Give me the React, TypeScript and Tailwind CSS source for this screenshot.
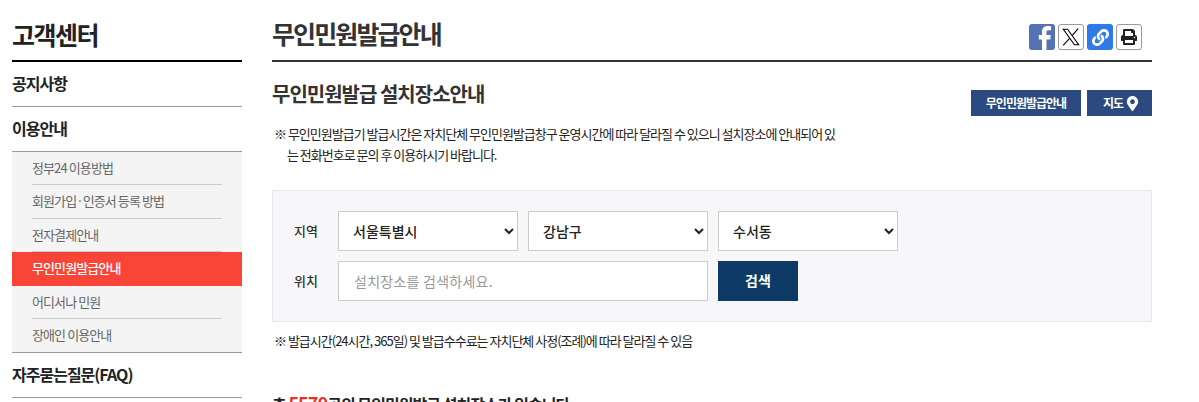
import React from 'react'
import { FaLink, FaMapMarkerAlt, FaPrint } from 'react-icons/fa'

const subMenus = ['정부24 이용방법', '회원가입·인증서 등록 방법', '전자결제안내', '무인민원발급안내', '어디서나 민원', '장애인 이용안내']

const App = () => {
  return (
    <div className="h-[402px] w-[1199px] overflow-hidden bg-white text-[#222] [font-family:'Noto_Sans_CJK_KR','Noto_Sans',sans-serif]">
      <div className="flex gap-[30px] pl-3">
        <aside className="w-[230px] shrink-0">
          <h2 className="h-[62px] border-b-2 border-black pt-[14px] text-[25px] leading-[40px] font-bold tracking-[-1.5px] text-[#222]">고객센터</h2>
          <div className="flex h-[45px] items-center border-b border-[#999] pb-[3px] text-[16px] font-bold tracking-[-1px]">공지사항</div>
          <div className="flex h-[45px] items-center border-b border-[#999] pb-[2px] text-[16px] font-bold tracking-[-1px]">이용안내</div>
          <ul className="h-[201px] border-b border-[#999] bg-[#f4f4f4]">
            {subMenus.map((menu, i) => (
              <li
                key={menu}
                className={
                  i === 3
                    ? 'flex h-[33.4px] items-center bg-[#f94438] pb-[2px] pl-5 text-[13px] font-medium tracking-[-0.9px] text-white'
                    : 'mx-5 flex h-[33.4px] items-center border-b border-[#ccc] pb-[1px] text-[13px] tracking-[-0.9px] text-[#666] last:border-b-0'
                }
              >
                {menu}
              </li>
            ))}
          </ul>
          <div className="flex h-[45px] items-center border-b border-[#999] pb-[3px] text-[16px] font-bold tracking-[-1px]">자주묻는질문(FAQ)</div>
        </aside>

        <main className="w-[880px] shrink-0">
          <div className="flex h-[62px] items-start justify-between border-b-2 border-[#333]">
            <h1 className="pt-[13px] text-[25px] leading-[40px] font-bold tracking-[-1.9px] text-[#333]">무인민원발급안내</h1>
            <div className="mt-6 mr-[10px] flex gap-[3px]">
              <span className="h-[26px] w-[26px] overflow-hidden rounded-[3px] bg-[#5472b4] text-white">
                <svg viewBox="0 0 26 26" className="h-[26px] w-[26px]" fill="currentColor">
                  <path d="M17.5 26V15.5h3.7l.6-4.4h-4.3V8.4c0-1.3.4-2.2 2.2-2.2h2.4V2.3C21.7 2.2 20.3 2 18.7 2 15.4 2 13 4.1 13 7.9v3.2H9.8v4.4H13V26Z" />
                </svg>
              </span>
              <span className="flex h-[26px] w-[26px] items-center justify-center rounded-[3px] border border-[#999] bg-white text-black">
                <svg viewBox="0 0 24 24" className="h-5 w-5" fill="currentColor">
                  <path fillRule="evenodd" d="M1.5 2H8.2L22.5 22H15.8ZM4 3.2 16.4 20.8H20L7.6 3.2Z" />
                  <path d="M20.6 2 13.3 10.3M10.6 13.4 2.6 22" stroke="currentColor" strokeWidth="1.3" fill="none" />
                </svg>
              </span>
              <span className="flex h-[26px] w-[26px] items-center justify-center rounded-[3px] bg-[#2f7ae5] text-white">
                <FaLink className="text-[17px]" />
              </span>
              <span className="flex h-[26px] w-[26px] items-center justify-center rounded-[3px] border border-[#999] bg-white text-[#222]">
                <FaPrint className="text-[16px]" />
              </span>
            </div>
          </div>

          <div className="flex justify-between">
            <div>
              <h3 className="mt-[17px] text-[20px] leading-[30px] font-bold tracking-[-1px] text-[#333]">무인민원발급 설치장소안내</h3>
              <p className="mt-[14px] ml-[2px] pl-[13px] -indent-[13px] text-[13px] leading-[21px] tracking-[-1px] whitespace-nowrap text-[#222]">
                ※ 무인민원발급기 발급시간은 자치단체 무인민원발급창구 운영시간에 따라 달라질 수 있으니 설치장소에 안내되어 있
                <br />
                는 전화번호로 문의 후 이용하시기 바랍니다.
              </p>
            </div>
            <div className="mt-7 flex gap-[6px]">
              <span className="flex h-[26px] w-[110px] items-center justify-center bg-[#2a4a80] text-[12px] font-bold tracking-[-1px] text-white">무인민원발급안내</span>
              <span className="flex h-[26px] w-[65px] items-center gap-[2px] bg-[#2a4a80] pl-4 text-[12px] font-bold tracking-[-1px] text-white">
                지도 <FaMapMarkerAlt className="text-[15px]" />
              </span>
            </div>
          </div>

          <div className="mt-[25px] h-[132px] border border-[#e8e8e8] bg-[#f7f7f9] px-[21px] pt-[20px]">
            <div className="flex items-center">
              <span className="w-11 text-[13px] font-medium text-[#333]">지역</span>
              <div className="flex gap-[10px]">
                <select className="h-10 w-[180px] border border-[#ccc] bg-white pl-[10px] text-[14px] font-medium text-[#222]"><option>서울특별시</option></select>
                <select className="h-10 w-[180px] border border-[#ccc] bg-white pl-[10px] text-[14px] font-medium text-[#222]"><option>강남구</option></select>
                <select className="h-10 w-[180px] border border-[#ccc] bg-white pl-[10px] text-[14px] font-medium text-[#222]"><option>수서동</option></select>
              </div>
            </div>
            <div className="mt-[10px] flex items-center">
              <span className="w-11 text-[13px] font-medium text-[#333]">위치</span>
              <input
                className="h-10 w-[370px] border border-[#ccc] bg-white px-[15px] text-[14px] tracking-[0.25px] placeholder:text-[#999]"
                placeholder="설치장소를 검색하세요."
              />
              <button className="ml-[10px] h-10 w-20 bg-[#0e3a66] pb-[1px] text-[14px] font-bold text-white">검색</button>
            </div>
          </div>

          <p className="mt-[9px] ml-[2px] text-[13px] leading-[20px] tracking-[-1px] text-[#222]">※ 발급시간(24시간, 365일) 및 발급수수료는 자치단체 사정(조례)에 따라 달라질 수 있음</p>

          <p className="mt-[40px] text-[16px] leading-[24px] font-bold tracking-[-0.95px] text-[#222]">
            총 <span className="text-[18px] text-[#e8322a]">5570</span>곳의 무인민원발급 설치장소가 있습니다.
          </p>
        </main>
      </div>
    </div>
  )
}

export default App
